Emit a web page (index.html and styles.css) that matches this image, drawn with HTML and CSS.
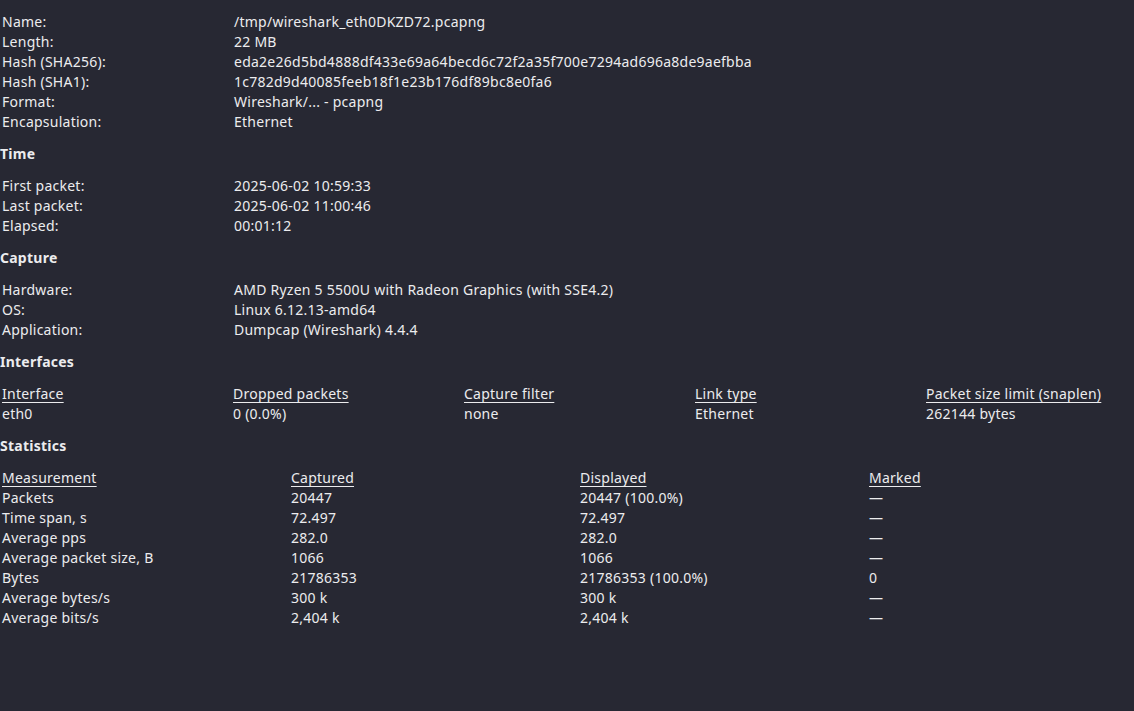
FILE: index.html
```html
<!DOCTYPE html>
<html>
<head>
<meta charset="utf-8">
<link rel="stylesheet" href="styles.css">
</head>
<body>
<div class="page">
  <table class="kv">
    <tr><td class="k">Name:</td><td>/tmp/wireshark_eth0DKZD72.pcapng</td></tr>
    <tr><td class="k">Length:</td><td>22 MB</td></tr>
    <tr><td class="k">Hash (SHA256):</td><td>eda2e26d5bd4888df433e69a64becd6c72f2a35f700e7294ad696a8de9aefbba</td></tr>
    <tr><td class="k">Hash (SHA1):</td><td>1c782d9d40085feeb18f1e23b176df89bc8e0fa6</td></tr>
    <tr><td class="k">Format:</td><td>Wireshark/... - pcapng</td></tr>
    <tr><td class="k">Encapsulation:</td><td>Ethernet</td></tr>
  </table>

  <h2 class="section">Time</h2>
  <table class="kv">
    <tr><td class="k">First packet:</td><td>2025-06-02 10:59:33</td></tr>
    <tr><td class="k">Last packet:</td><td>2025-06-02 11:00:46</td></tr>
    <tr><td class="k">Elapsed:</td><td>00:01:12</td></tr>
  </table>

  <h2 class="section">Capture</h2>
  <table class="kv">
    <tr><td class="k">Hardware:</td><td>AMD Ryzen 5 5500U with Radeon Graphics (with SSE4.2)</td></tr>
    <tr><td class="k">OS:</td><td>Linux 6.12.13-amd64</td></tr>
    <tr><td class="k">Application:</td><td>Dumpcap (Wireshark) 4.4.4</td></tr>
  </table>

  <h2 class="section">Interfaces</h2>
  <table class="grid iface">
    <tr><th>Interface</th><th>Dropped packets</th><th>Capture filter</th><th>Link type</th><th>Packet size limit (snaplen)</th></tr>
    <tr><td>eth0</td><td>0 (0.0%)</td><td>none</td><td>Ethernet</td><td>262144 bytes</td></tr>
  </table>

  <h2 class="section">Statistics</h2>
  <table class="grid stats">
    <tr><th>Measurement</th><th>Captured</th><th>Displayed</th><th>Marked</th></tr>
    <tr><td>Packets</td><td>20447</td><td>20447 (100.0%)</td><td>—</td></tr>
    <tr><td>Time span, s</td><td>72.497</td><td>72.497</td><td>—</td></tr>
    <tr><td>Average pps</td><td>282.0</td><td>282.0</td><td>—</td></tr>
    <tr><td>Average packet size, B</td><td>1066</td><td>1066</td><td>—</td></tr>
    <tr><td>Bytes</td><td>21786353</td><td>21786353 (100.0%)</td><td>0</td></tr>
    <tr><td>Average bytes/s</td><td>300 k</td><td>300 k</td><td>—</td></tr>
    <tr><td>Average bits/s</td><td>2,404 k</td><td>2,404 k</td><td>—</td></tr>
  </table>
</div>
</body>
</html>
```

FILE: styles.css
```css
html, body {
  margin: 0;
  padding: 0;
  background: #272833;
}
body {
  width: 1134px;
  height: 711px;
  overflow: hidden;
  color: #ececee;
  font-family: "Noto Sans", sans-serif;
  font-size: 14px;
  line-height: 20px;
  letter-spacing: 0.25px;
}
.page {
  padding-top: 12px;
}
table {
  border-collapse: collapse;
  border-spacing: 0;
  table-layout: fixed;
}
td, th {
  padding: 0 0 0 2px;
  height: 20px;
  text-align: left;
  vertical-align: middle;
  white-space: nowrap;
  font-weight: normal;
  overflow: visible;
}
.kv td.k {
  width: 230px;
}
.section {
  margin: 12px 0;
  font-size: 14px;
  line-height: 20px;
  font-weight: bold;
  padding: 0;
}
.grid th {
  text-decoration: underline;
  text-underline-offset: 3px;
}
.iface {
  width: 1155px;
}
.iface td, .iface th {
  width: 229px;
}
.stats {
  width: 1156px;
}
.stats td, .stats th {
  width: 287px;
}
```
